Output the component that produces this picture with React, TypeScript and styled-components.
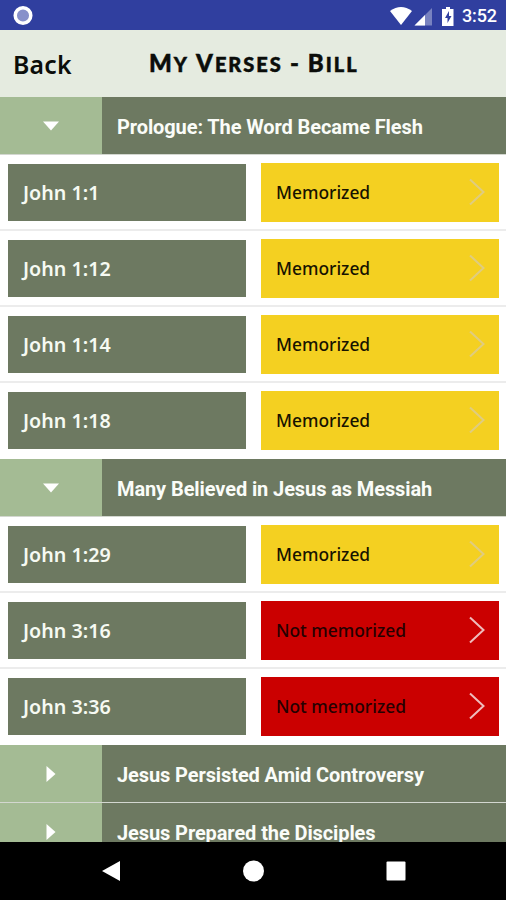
import React from "react";
import styled, { createGlobalStyle } from "styled-components";

const GlobalStyle = createGlobalStyle`
  * { box-sizing: border-box; }
  body { margin: 0; background: #fff; }
`;

const Screen = styled.div`
  width: 506px;
  height: 900px;
  display: flex;
  flex-direction: column;
  overflow: hidden;
  background: #fff;
`;

const StatusBar = styled.div`
  flex: none;
  height: 30px;
  padding: 1px 9px 0 12px;
  display: flex;
  align-items: center;
  justify-content: space-between;
  background: #303f9f;
`;

const StatusIcons = styled.div`
  display: flex;
  align-items: center;
`;

const Clock = styled.span`
  margin-left: 7px;
  color: #fff;
  font: 500 18px/28px Roboto, sans-serif;
  letter-spacing: -0.1px;
`;

const Header = styled.header`
  flex: none;
  height: 67px;
  padding-left: 13px;
  display: grid;
  grid-template-columns: 136px 1fr;
  align-items: center;
  background: #e5ebe0;
  color: #0b0d0a;
`;

const BackLabel = styled.span`
  font: 600 24.800px/32px "Noto Sans", sans-serif;
  letter-spacing: 0.2px;
  white-space: nowrap;
`;

const Title = styled.h1`
  margin: 0;
  font: 900 20px/32px Lato, sans-serif;
  letter-spacing: 2px;
  text-transform: uppercase;
  white-space: nowrap;
  -webkit-text-stroke: 0.5px #0b0d0a;
`;

const Word = styled.span`
  display: inline-block;
  margin-right: 7px;
  &::first-letter { font-size: 24px; }
`;

const List = styled.main`
  flex: 1;
  min-height: 0;
  overflow: hidden;
`;

const SectionBar = styled.div`
  height: 58px;
  display: grid;
  grid-template-columns: 102px 1fr;
  grid-template-rows: 57px;
  border-bottom: 1px solid #d3d7d0;
  background: #6d7961;
`;

const Toggle = styled.div`
  display: flex;
  align-items: center;
  justify-content: center;
  background: #a4bb94;
`;

const SectionTitle = styled.div`
  padding: 2px 0 0 15px;
  color: #fafcf8;
  font: 700 20px/56px Roboto, sans-serif;
  letter-spacing: -0.1px;
  white-space: nowrap;
`;

const VerseRow = styled.div`
  height: 76px;
  padding: 0 7px 0 8px;
  display: grid;
  grid-template-columns: 238px 238px;
  column-gap: 15px;
  align-items: center;
  border-bottom: 2px solid #ececec;
  &:last-child { border-bottom-color: #fff; }
`;

const Reference = styled.div`
  height: 57px;
  padding: 0 0 0 15px;
  background: #6d7961;
  color: #f6faf2;
  font: 600 19.700px/57px "Noto Sans", sans-serif;
  white-space: nowrap;
`;

const Status = styled.div<{ $done: boolean }>`
  height: 59px;
  padding: 0 14px 0 15px;
  display: flex;
  align-items: center;
  justify-content: space-between;
  background: ${(p) => (p.$done ? "#f4d021" : "#cb0000")};
  color: ${(p) => (p.$done ? "#171300" : "#250000")};
  stroke: ${(p) => (p.$done ? "#dfcc80" : "#efbcbc")};
  font: 500 17.400px/60px "Noto Sans", sans-serif;
  white-space: nowrap;
`;

const NavBar = styled.nav`
  flex: none;
  height: 58px;
  display: flex;
  align-items: center;
  justify-content: space-between;
  padding: 0 100px 0 102px;
  background: #000;
`;

type Verse = { name: string; done: boolean };
type Section = { title: string; verses: Verse[] };

const sections: Section[] = [
  {
    title: "Prologue: The Word Became Flesh",
    verses: [
      { name: "John 1:1", done: true },
      { name: "John 1:12", done: true },
      { name: "John 1:14", done: true },
      { name: "John 1:18", done: true },
    ],
  },
  {
    title: "Many Believed in Jesus as Messiah",
    verses: [
      { name: "John 1:29", done: true },
      { name: "John 3:16", done: false },
      { name: "John 3:36", done: false },
    ],
  },
  { title: "Jesus Persisted Amid Controversy", verses: [] },
  { title: "Jesus Prepared the Disciples", verses: [] },
];

const Arrow = ({ open }: { open: boolean }) => (
  <svg width="18" height="18" viewBox="0 0 18 18" fill="#fff">
    <path d={open ? "M1 4.500h16L9 13.500z" : "M4.5 1v16L13.500 9z"} />
  </svg>
);

const Chevron = () => (
  <svg width="17" height="30" viewBox="0 0 17 30" fill="none" strokeWidth="2">
    <path d="M2 2.500L15.500 15L2 27.500" />
  </svg>
);

export default function App() {
  return (
    <Screen>
      <GlobalStyle />
      <StatusBar>
        <svg width="22" height="22" viewBox="0 0 22 22">
          <circle cx="11" cy="10.500" r="7.800" fill="#8790ca" stroke="#fff" strokeWidth="3.500" />
        </svg>
        <StatusIcons>
          <svg width="65" height="24" viewBox="0 0 65 24" fill="#fff">
            <path d="M0 7Q11 -1 22 7L11 21z" />
            <path d="M42 4V21.500H24.500z" opacity=".35" />
            <path d="M35 11V21.500H24.500z" />
            <path d="M56 3h4v2h3.500v17H52V5h4z" />
            <path d="M59 7l-4 7h2.500v5l4-7H59z" fill="#303f9f" />
          </svg>
          <Clock>3:52</Clock>
        </StatusIcons>
      </StatusBar>
      <Header>
        <BackLabel>Back</BackLabel>
        <Title>
          {["My", "Verses", "-", "Bill"].map((word) => (
            <Word key={word}>{word}</Word>
          ))}
        </Title>
      </Header>
      <List>
        {sections.map(({ title, verses }) => (
          <section key={title}>
            <SectionBar>
              <Toggle>
                <Arrow open={verses.length > 0} />
              </Toggle>
              <SectionTitle>{title}</SectionTitle>
            </SectionBar>
            {verses.map(({ name, done }) => (
              <VerseRow key={name}>
                <Reference>{name}</Reference>
                <Status $done={done}>
                  {done ? "Memorized" : "Not memorized"}
                  <Chevron />
                </Status>
              </VerseRow>
            ))}
          </section>
        ))}
      </List>
      <NavBar>
        <svg width="20" height="22" viewBox="0 0 20 22" fill="#fff">
          <path d="M0 11L18 1V21z" />
        </svg>
        <svg width="22" height="22" viewBox="0 0 22 22" fill="#fff">
          <circle cx="10.500" cy="11" r="10.500" />
        </svg>
        <svg width="20" height="20" viewBox="0 0 20 20" fill="#fff">
          <rect x="0.500" y="0.500" width="19" height="19" rx="1" />
        </svg>
      </NavBar>
    </Screen>
  );
}
